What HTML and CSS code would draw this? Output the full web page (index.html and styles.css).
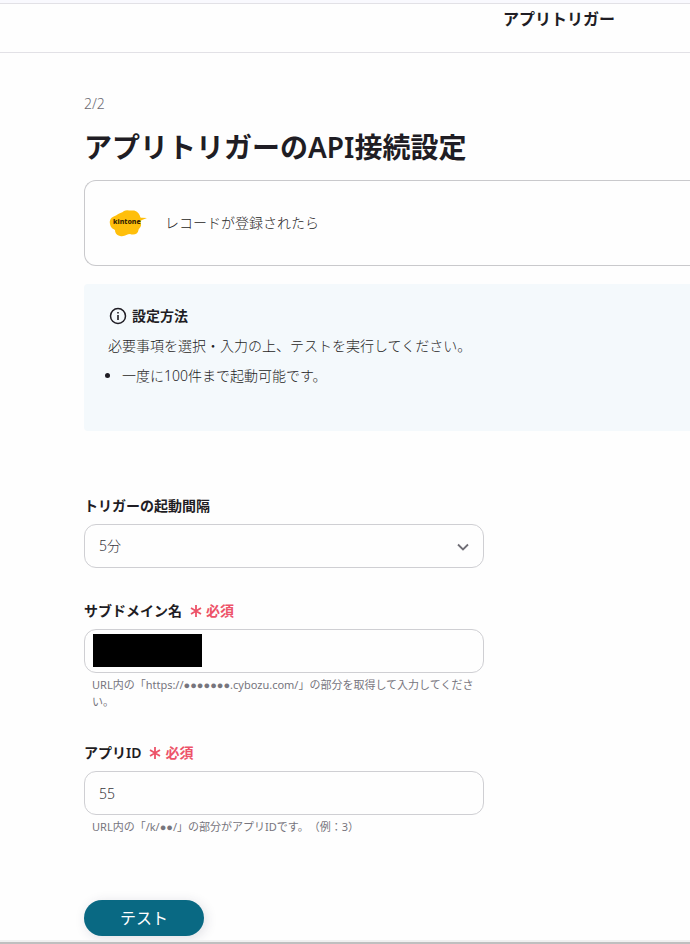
FILE: index.html
```html
<!DOCTYPE html>
<html lang="ja">
<head>
<meta charset="utf-8">
<meta name="viewport" content="width=device-width, initial-scale=1">
<title>アプリトリガー</title>
<link rel="stylesheet" href="styles.css">
</head>
<body>
<header class="topbar">
  <p class="topbar-title">アプリトリガー</p>
</header>
<main class="content">
  <p class="step">2/2</p>
  <h1 class="title">アプリトリガーのAPI接続設定</h1>

  <section class="trigger-card">
    <svg class="trigger-logo" viewBox="0 0 38 28" role="img" aria-label="kintone">
      <path fill="#ffbf0b" d="M1 15C0 11 2 8 7 6.500C10 4 13 4 15 2C18 .5 21 2 23 1.500C27 1 30 4 31 7C31 8.500 32 9 33 8.700L38 9L33 11C31.500 11.500 31.500 13 32 15C32.500 18 30 19 29.500 21C29 25 25 26.500 21 25C18 25 16 28 11 27C7 26 6 23 6 21C5 20 2 20 1 15Z"/>
      <text class="logo-text" x="4" y="15">kintone</text>
    </svg>
    <p class="trigger-name">レコードが登録されたら</p>
  </section>

  <section class="notice">
    <h2 class="notice-title">
      <svg class="info-icon" viewBox="0 0 20 20" aria-hidden="true">
        <circle cx="10" cy="10" r="7.500" fill="none" stroke="currentColor" stroke-width="1.500"/>
        <path d="M9.200 9h1.600v5H9.200zM9.200 6h1.600v1.600H9.200z" fill="currentColor"/>
      </svg>
      設定方法
    </h2>
    <p class="notice-text">必要事項を選択・入力の上、テストを実行してください。</p>
    <ul class="notice-list">
      <li>一度に100件まで起動可能です。</li>
    </ul>
  </section>

  <form class="form">
    <div class="field">
      <label class="label" for="interval">トリガーの起動間隔</label>
      <div class="control">
        <select class="input" id="interval"><option>5分</option></select>
        <svg class="chevron" viewBox="0 0 12 8" aria-hidden="true">
          <path d="M1 1.500L6 6.500L11 1.500" fill="none" stroke="currentColor" stroke-width="1.800"/>
        </svg>
      </div>
    </div>

    <div class="field">
      <label class="label" for="subdomain">サブドメイン名
        <span class="required"><svg class="asterisk" viewBox="0 0 12 12" aria-hidden="true"><path d="M6 0V12M1 3L11 9M11 3L1 9" stroke="currentColor" stroke-width="1.800"/></svg>必須</span>
      </label>
      <div class="control">
        <input class="input" id="subdomain" type="text">
        <span class="mask"></span>
      </div>
      <p class="help">URL内の「https://<span class="dots">●●●●●●●</span>.cybozu.com/」の部分を取得して入力してください。</p>
    </div>

    <div class="field">
      <label class="label" for="app-id">アプリID
        <span class="required"><svg class="asterisk" viewBox="0 0 12 12" aria-hidden="true"><path d="M6 0V12M1 3L11 9M11 3L1 9" stroke="currentColor" stroke-width="1.800"/></svg>必須</span>
      </label>
      <div class="control">
        <input class="input" id="app-id" type="text" value="55">
      </div>
      <p class="help">URL内の「/k/<span class="dots">●●</span>/」の部分がアプリIDです。（例：3）</p>
    </div>

    <button class="test-button" type="button">テスト</button>
  </form>
</main>
<div class="bottom-edge"></div>
</body>
</html>
```
FILE: styles.css
```css
* {
  box-sizing: border-box;
}

body {
  margin: 0;
  min-height: 100vh;
  display: flex;
  flex-direction: column;
  overflow-x: hidden;
  background: #fefefe;
  color: #1f1d24;
  font-family: "Noto Sans", "Noto Sans CJK JP", sans-serif;
  font-size: 14px;
  font-weight: 300;
  line-height: 24px;
}

h1, h2, p, ul {
  margin: 0;
}

.topbar {
  border-top: 3px solid #f9f9fe;
  border-bottom: 1px solid #e2e1e6;
}

.topbar-title {
  border-top: 1px solid #e2e1e6;
  padding: 3px 75px 21px;
  text-align: right;
  font-size: 16px;
  font-weight: 600;
}

.content {
  flex: 1;
  padding: 39px 0 4px 84px;
}

.step {
  color: #6c6a72;
}

.title {
  margin: 11px 0 13px;
  font-size: 28px;
  font-weight: 600;
  line-height: 40px;
}

.trigger-card {
  display: flex;
  align-items: center;
  gap: 18px;
  height: 86px;
  padding: 0 24px;
  border: 1px solid #c9c9cc;
  border-right: 0;
  border-radius: 12px 0 0 12px;
}

.trigger-logo {
  width: 38px;
  height: 28px;
}

.logo-text {
  font-size: 7px;
  font-weight: 800;
  fill: #392600;
}

.notice {
  margin-top: 18px;
  padding: 20px 24px 43px;
  border-radius: 4px 0 0 4px;
  background: #f4f9fc;
}

.notice-title {
  display: flex;
  align-items: center;
  gap: 4px;
  font-size: 14px;
  font-weight: 600;
}

.info-icon {
  width: 20px;
  height: 20px;
}

.notice-text {
  margin: 6px 0;
}

.notice-list {
  padding-left: 14px;
}

.form {
  display: flex;
  flex-direction: column;
  align-items: flex-start;
  margin-top: 63px;
}

.field {
  width: 400px;
  max-width: 100%;
  margin-bottom: 31px;
}

.label {
  display: flex;
  align-items: center;
  gap: 8px;
  margin-bottom: 6px;
  font-weight: 600;
}

.required {
  display: flex;
  align-items: center;
  gap: 4px;
  color: #ed5369;
}

.asterisk {
  width: 12px;
  height: 12px;
}

.control {
  position: relative;
}

.input {
  display: block;
  width: 100%;
  height: 44px;
  padding: 0 14px;
  appearance: none;
  border: 1px solid #cfcfd3;
  border-radius: 12px;
  background: transparent;
  color: #38363d;
  font: inherit;
}

.chevron {
  position: absolute;
  top: 19px;
  right: 15px;
  width: 12px;
  height: 8px;
  color: #706e76;
  pointer-events: none;
}

.mask {
  position: absolute;
  top: 5px;
  left: 9px;
  width: 109px;
  height: 33px;
  background: #000;
}

.help {
  padding: 3px 8px 0;
  color: #77757d;
  font-size: 11px;
  font-weight: 400;
  line-height: 17px;
  text-spacing-trim: space-all;
}

.dots {
  font-family: "Liberation Sans", sans-serif;
  line-height: 1;
}

.test-button {
  width: 120px;
  height: 36px;
  margin-top: 34px;
  border: 0;
  border-radius: 18px;
  background: #096983;
  box-shadow: 2px 2px 12px #30305026;
  color: #fff;
  font: inherit;
  font-size: 16px;
  font-weight: 400;
}

.bottom-edge {
  height: 4px;
  border-top: 2px solid #f0f0f0;
  background: #bfbfbf;
}
```
